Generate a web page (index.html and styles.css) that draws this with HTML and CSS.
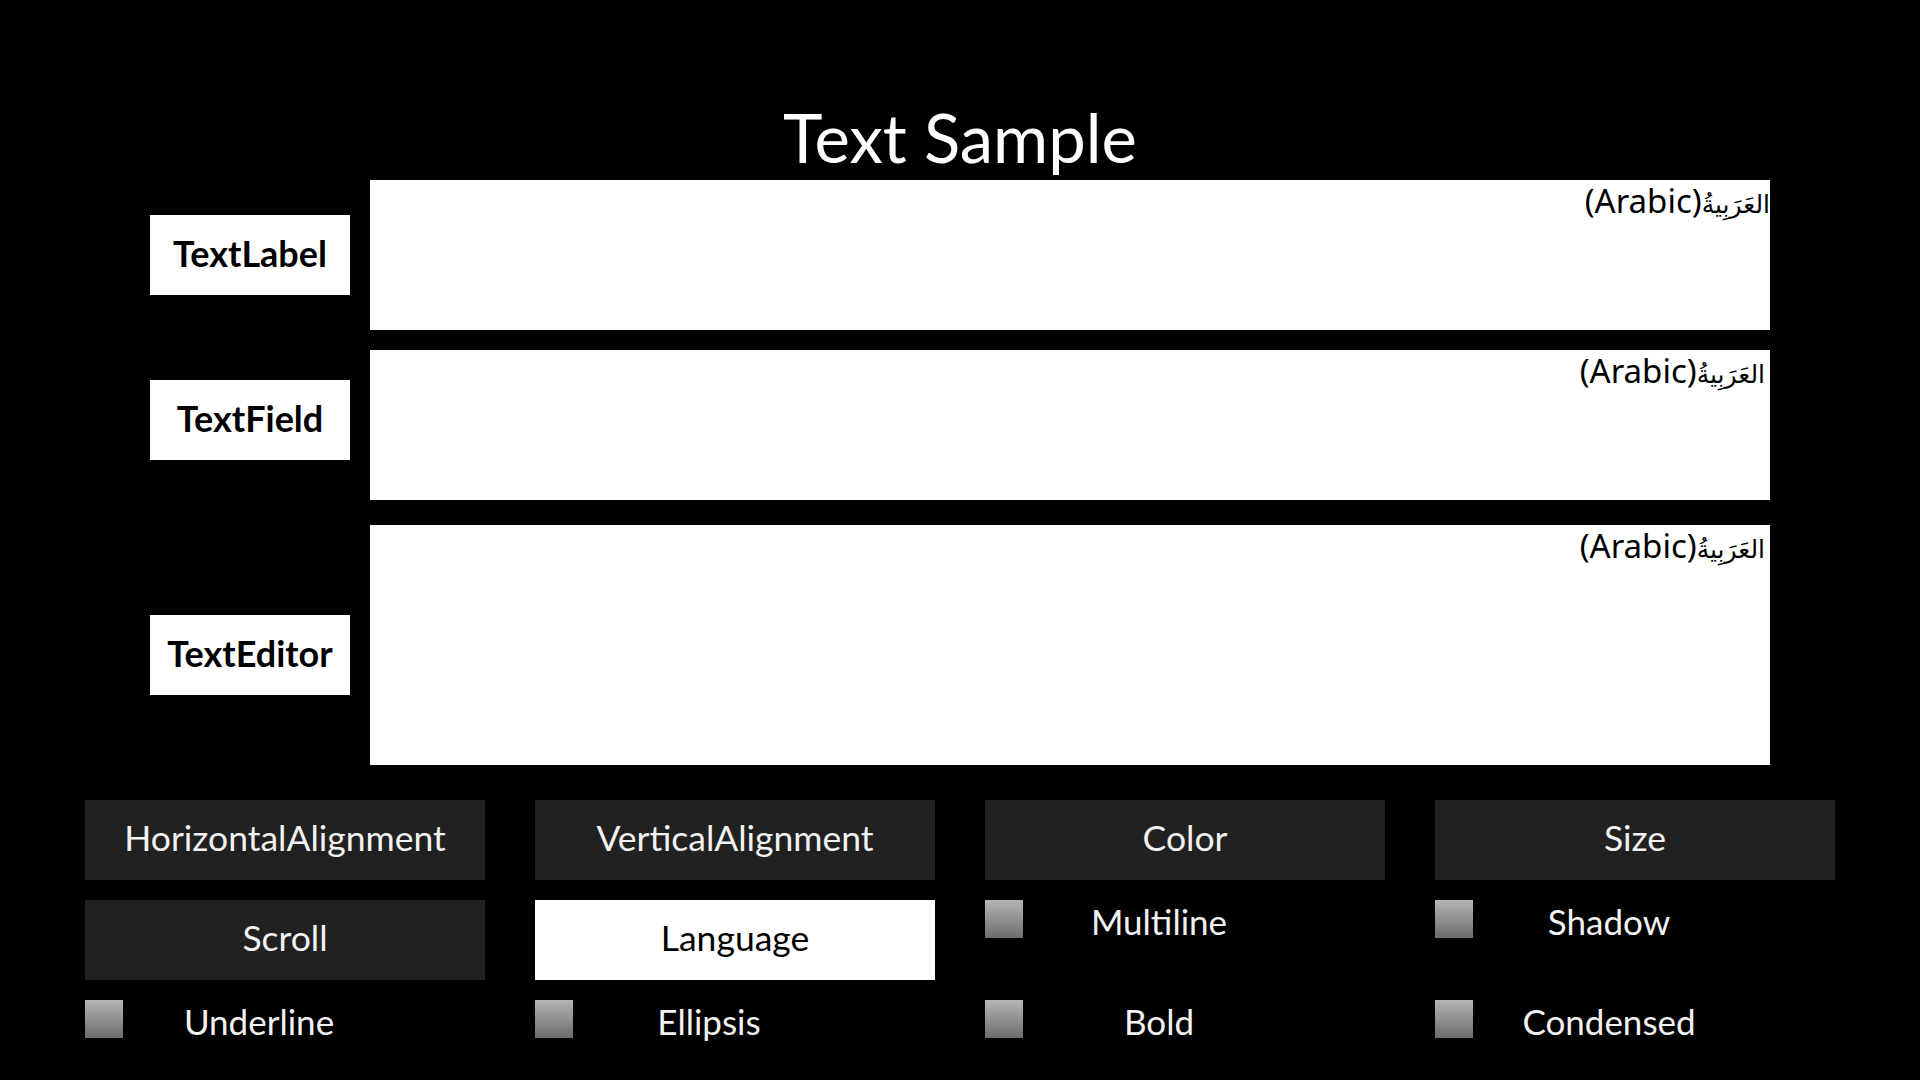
FILE: index.html
```html
<!DOCTYPE html>
<html lang="en">
<head>
<meta charset="utf-8">
<title>Text Sample</title>
<link rel="stylesheet" href="styles.css">
</head>
<body>
<div class="page">
  <h1 class="title">Text Sample</h1>
  <div class="rows">
    <div class="row row-label">
      <div class="label">TextLabel</div>
      <div class="box box-flush"><div class="sample">(Arabic)<span class="ar" lang="ar">العَرَبِيةُ</span></div></div>
    </div>
    <div class="row row-field">
      <div class="label">TextField</div>
      <div class="box"><div class="sample">(Arabic)<span class="ar" lang="ar">العَرَبِيةُ</span></div></div>
    </div>
    <div class="row row-editor">
      <div class="label">TextEditor</div>
      <div class="box"><div class="sample">(Arabic)<span class="ar" lang="ar">العَرَبِيةُ</span></div></div>
    </div>
  </div>
  <div class="controls">
    <div class="btn">HorizontalAlignment</div>
    <div class="btn">VerticalAlignment</div>
    <div class="btn">Color</div>
    <div class="btn">Size</div>
    <div class="btn">Scroll</div>
    <div class="btn btn-selected">Language</div>
    <div class="check"><span class="check-box"></span><span class="check-text">Multiline</span></div>
    <div class="check"><span class="check-box"></span><span class="check-text">Shadow</span></div>
    <div class="check"><span class="check-box"></span><span class="check-text">Underline</span></div>
    <div class="check"><span class="check-box"></span><span class="check-text">Ellipsis</span></div>
    <div class="check"><span class="check-box"></span><span class="check-text">Bold</span></div>
    <div class="check"><span class="check-box"></span><span class="check-text">Condensed</span></div>
  </div>
</div>
</body>
</html>
```
FILE: styles.css
```css
html, body {
  margin: 0;
  padding: 0;
  background: #000;
}
body {
  width: 1920px;
  height: 1080px;
  overflow: hidden;
  font-family: "Lato", "Noto Sans", "DejaVu Sans", sans-serif;
  color: #fff;
}
.page {
  display: flex;
  flex-direction: column;
  padding-top: 97px;
}
.title {
  margin: 0;
  font-size: 67px;
  font-weight: 400;
  line-height: 80px;
  height: 80px;
  text-align: center;
  color: #fff;
}
.rows {
  display: flex;
  flex-direction: column;
  margin-top: 3px;
  padding-left: 150px;
}
.row {
  display: flex;
  align-items: flex-start;
  gap: 20px;
}
.row-label { height: 150px; }
.row-field { height: 150px; margin-top: 20px; }
.row-editor { height: 240px; margin-top: 25px; }
.label {
  width: 200px;
  height: 80px;
  box-sizing: border-box;
  padding-bottom: 5px;
  background: #fff;
  color: #000;
  font-size: 36px;
  font-weight: 700;
  display: flex;
  align-items: center;
  justify-content: center;
}
.row-label .label { margin-top: 35px; }
.row-field .label { margin-top: 30px; }
.row-editor .label { margin-top: 90px; }
.box {
  width: 1400px;
  height: 100%;
  background: #fff;
  padding-right: 5px;
  box-sizing: border-box;
}
.box-flush { padding-right: 0; }
.sample {
  color: #000;
  font-family: "Noto Sans", "DejaVu Sans", sans-serif;
  font-size: 33px;
  line-height: 42px;
  text-align: right;
  direction: ltr;
}
.ar {
  font-size: 25px;
  font-family: "DejaVu Sans", "Noto Sans", sans-serif;
}
.controls {
  display: grid;
  grid-template-columns: repeat(4, 400px);
  grid-auto-rows: 80px;
  column-gap: 50px;
  row-gap: 20px;
  margin-top: 35px;
  padding-left: 85px;
}
.btn {
  background: #212121;
  color: #f2f2f2;
  font-size: 35.5px;
  box-sizing: border-box;
  padding-bottom: 5px;
  display: flex;
  align-items: center;
  justify-content: center;
}
.btn-selected {
  background: #fff;
  color: #000;
}
.check {
  display: flex;
  align-items: flex-start;
}
.check-box {
  width: 38px;
  height: 38px;
  flex: none;
  background: linear-gradient(to bottom, #b5b5b5, #6c6c6c);
}
.check-text {
  width: 272px;
  text-align: center;
  font-size: 35px;
  line-height: 43px;
  color: #f2f2f2;
}
```
